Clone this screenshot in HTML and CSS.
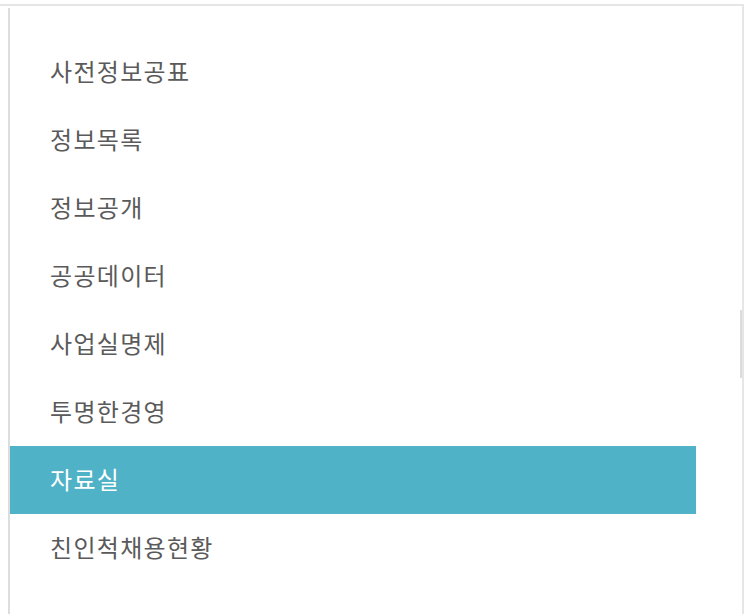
FILE: index.html
```html
<!DOCTYPE html>
<html lang="ko">
<head>
<meta charset="utf-8">
<link rel="stylesheet" href="styles.css">
</head>
<body>
<div class="frame">
  <nav class="menu">
    <ul class="menu-list">
      <li class="menu-item">사전정보공표</li>
      <li class="menu-item">정보목록</li>
      <li class="menu-item">정보공개</li>
      <li class="menu-item">공공데이터</li>
      <li class="menu-item">사업실명제</li>
      <li class="menu-item">투명한경영</li>
      <li class="menu-item is-active">자료실</li>
      <li class="menu-item">친인척채용현황</li>
    </ul>
  </nav>
  <div class="scroll-thumb"></div>
</div>
</body>
</html>
```
FILE: styles.css
```css
html, body {
  margin: 0;
  padding: 0;
  background: #fff;
}
body {
  font-family: "Noto Sans CJK KR", "Noto Sans", sans-serif;
  overflow: hidden;
  height: 614px;
}
.frame {
  position: relative;
  margin-top: 4px;
  width: 744px;
  height: 610px;
  border-top: 2px solid #e6e6e6;
  border-right: 2px solid #e6e6e6;
  box-sizing: border-box;
}
.menu {
  margin-top: 2px;
  margin-left: 8px;
  height: 606px;
  border-left: 2px solid #dddddd;
  box-sizing: border-box;
  padding-top: 30px;
}
.menu-list {
  list-style: none;
  margin: 0;
  padding: 0;
  width: 686px;
}
.menu-item {
  box-sizing: border-box;
  height: 68px;
  display: flex;
  align-items: center;
  padding-left: 40px;
  padding-bottom: 4px;
  font-size: 24px;
  color: #5a5a5a;
  letter-spacing: 1.3px;
}
.menu-item.is-active {
  background: #4fb2c6;
  color: #ffffff;
}
.scroll-thumb {
  position: absolute;
  right: 0;
  top: 304px;
  width: 2px;
  height: 68px;
  background: #dcdcdc;
}
```
